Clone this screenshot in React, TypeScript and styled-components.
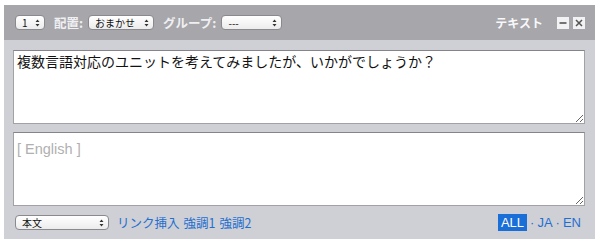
import React from "react";
import styled, { createGlobalStyle } from "styled-components";

const Global = createGlobalStyle`
  html, body { margin: 0; padding: 0; background: #ffffff; }
  body { font-family: "Liberation Sans", Arial, "Noto Sans CJK JP", sans-serif; }
`;

const Unit = styled.div`
  margin: 5px 4px 0 4px;
  width: 591px;
  background: #cfd0d6;
`;

const Header = styled.div`
  height: 35px;
  background: #a6a6ab;
  display: flex;
  align-items: center;
  padding: 0 10px 0 11px;
  box-sizing: border-box;
`;

const Group = styled.div`
  display: flex;
  align-items: center;
  gap: 5px;
`;

const Label = styled.span`
  color: #f0f0f2;
  font-weight: bold;
  font-size: 12.5px;
  margin-left: 4px;
  font-family: "Noto Sans CJK JP", sans-serif;
`;

const Title = styled.span`
  margin-left: auto;
  color: #f8f8fa;
  font-size: 12px;
  font-weight: bold;
  font-family: "Noto Sans CJK JP", sans-serif;
  margin-right: 10px;
`;

const IconBtn = styled.div`
  width: 12px;
  height: 12px;
  background: #f2f2f4;
  display: flex;
  align-items: center;
  justify-content: center;
  margin-left: 4px;
`;

const Select = styled.div<{ $w: number }>`
  width: ${(p) => p.$w}px;
  height: 15px;
  box-sizing: border-box;
  border: 1px solid #8a8a8e;
  border-radius: 4px;
  background: linear-gradient(#ffffff, #ececec);
  display: flex;
  align-items: center;
  justify-content: space-between;
  padding: 0 4px 0 6px;
  font-size: 10px;
  color: #111;
  font-family: "Noto Sans CJK JP", sans-serif;
  line-height: 1;
`;

const Body = styled.div`
  padding: 10px 11px 0 9px;
  display: flex;
  flex-direction: column;
  gap: 8px;
`;

const Area = styled.textarea<{ $pt: number }>`
  display: block;
  width: 572px;
  height: 74px;
  box-sizing: border-box;
  margin: 0;
  border: 1px solid #a2a2a6;
  border-top-color: #858589;
  background: #fff;
  padding: ${(p) => p.$pt}px 3px 2px 3px;
  font-size: 14px;
  line-height: 17px;
  color: #111;
  font-family: "Noto Sans CJK JP", sans-serif;
  outline: none;
  &::placeholder { color: #b0b0b0; font-family: "Liberation Sans", Arial, sans-serif; font-size: 14.5px; }
`;

const Footer = styled.div`
  height: 33px;
  display: flex;
  align-items: center;
  padding: 0 10px 0 11px;
  box-sizing: border-box;
`;

const Links = styled.div`
  display: flex;
  gap: 4px;
  margin-left: 8px;
  font-size: 12.5px;
  color: #1f6fd0;
  font-family: "Noto Sans CJK JP", sans-serif;
`;

const Langs = styled.div`
  margin-left: auto;
  display: flex;
  align-items: center;
  font-size: 13px;
  color: #1f6fd0;
  font-family: "Liberation Sans", Arial, sans-serif;
  margin-right: 4px;
`;

const Lang = styled.span<{ $active?: boolean }>`
  padding: 1px ${(p) => (p.$active ? 3 : 0)}px;
  background: ${(p) => (p.$active ? "#1a6ed8" : "transparent")};
  color: ${(p) => (p.$active ? "#fff" : "#1f6fd0")};
`;

const Dot = styled.span`
  margin: 0 3px;
`;

const Arrows = () => (
  <svg width="5" height="8" viewBox="0 0 5 8">
    <path d="M2.5 0.5L4.5 3H0.5Z M2.5 7.5L4.5 5H0.5Z" fill="#333" />
  </svg>
);

const Sel = ({ w, text }: { w: number; text: string }) => (
  <Select $w={w}>
    <span>{text}</span>
    <Arrows />
  </Select>
);

export default function App() {
  return (
    <>
      <Global />
      <Unit>
        <Header>
          <Group>
            <Sel w={30} text="1" />
            <Label>配置:</Label>
            <Sel w={66} text="おまかせ" />
            <Label>グループ:</Label>
            <Sel w={61} text="---" />
          </Group>
          <Title>テキスト</Title>
          <IconBtn>
            <svg width="8" height="8" viewBox="0 0 8 8">
              <rect x="0.5" y="3.2" width="7" height="1.6" fill="#555" />
            </svg>
          </IconBtn>
          <IconBtn>
            <svg width="8" height="8" viewBox="0 0 8 8">
              <path d="M1 1L7 7M7 1L1 7" stroke="#555" strokeWidth="1.5" />
            </svg>
          </IconBtn>
        </Header>
        <Body>
          <Area $pt={2} defaultValue="複数言語対応のユニットを考えてみましたが、いかがでしょうか？" />
          <Area $pt={8} placeholder="[ English ]" />
        </Body>
        <Footer>
          <Sel w={94} text="本文" />
          <Links>
            <span>リンク挿入</span>
            <span>強調1</span>
            <span>強調2</span>
          </Links>
          <Langs>
            <Lang $active>ALL</Lang>
            <Dot>·</Dot>
            <Lang>JA</Lang>
            <Dot>·</Dot>
            <Lang>EN</Lang>
          </Langs>
        </Footer>
      </Unit>
    </>
  );
}
